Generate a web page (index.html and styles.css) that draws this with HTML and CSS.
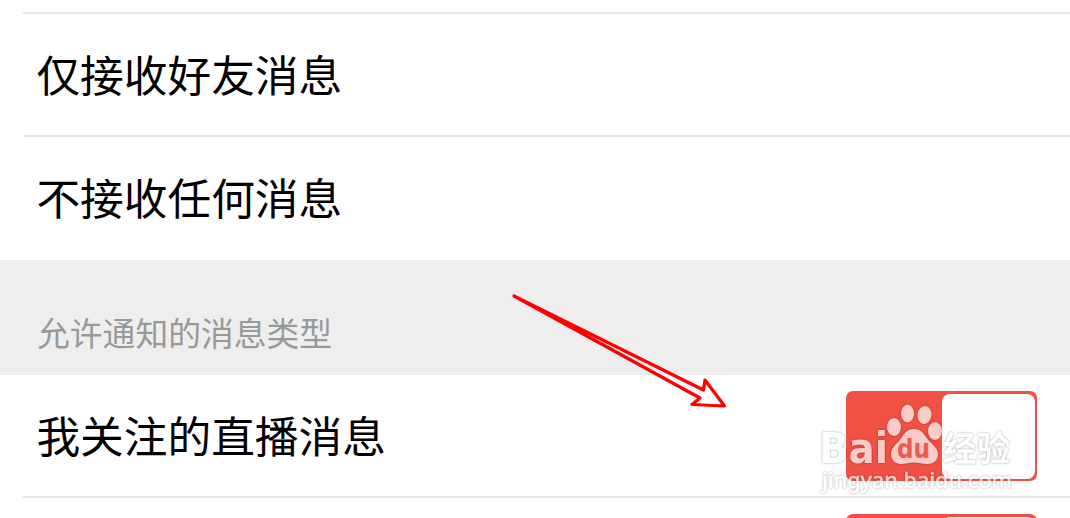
FILE: index.html
```html
<!DOCTYPE html>
<html lang="zh-CN">

<head>
    <meta charset="UTF-8">
    <meta name="viewport" content="width=device-width, initial-scale=1.0">
    <title>消息设置</title>
    <link rel="stylesheet" href="styles.css">
</head>
<body>
<div class="page">
  <div class="row row-top"></div>
  <div class="row"><span class="label">仅接收好友消息</span></div>
  <div class="row row-last"><span class="label">不接收任何消息</span></div>
  <h2 class="section">允许通知的消息类型</h2>
  <div class="row row-live">
    <span class="label">我关注的直播消息</span>
    <span class="switch"><span class="knob"></span></span>
  </div>
  <div class="row row-next">
    <span class="switch"><span class="knob"></span></span>
  </div>
</div>

<svg class="arrow" width="230" height="130" viewBox="505 285 230 130">
  <path d="M514 296 L703.500 390 L705 380 L724.500 406 L692 404.500 L700 398 Z"/>
</svg>

<svg class="watermark" width="220" height="110" viewBox="810 395 220 110">
  <g class="mark">
    <text class="bai" x="819" y="462.500" textLength="69" lengthAdjust="spacingAndGlyphs">Bai</text>
    <ellipse cx="894" cy="427" rx="7" ry="9"/>
    <ellipse cx="907.500" cy="413.500" rx="6.500" ry="9"/>
    <ellipse cx="924.500" cy="415" rx="7" ry="9" transform="rotate(8 924.500 415)"/>
    <ellipse cx="935" cy="431" rx="7" ry="9"/>
    <path d="M914 429 C920 429 923 432 926 437 C930 443 938 447 938 454 C938 461 933 464 927 464 C922 464 919 462.500 914 462.500 C909 462.500 906 464 901 464 C895 464 891 460 891 454 C891 447 898 443 902 437 C905 432 908 429 914 429 Z"/>
    <text class="jingyan" x="943" y="460.500" textLength="67" lengthAdjust="spacingAndGlyphs">经验</text>
    <text class="site" x="822" y="488" textLength="190" lengthAdjust="spacingAndGlyphs">jingyan.baidu.com</text>
  </g>
  <text class="du" x="897" y="457.500" textLength="33" lengthAdjust="spacingAndGlyphs">du</text>
</svg>
</body>
</html>
```

FILE: styles.css
```css
body {
    font-family: "Noto Sans CJK SC", sans-serif;
    background-color: #fff;
    margin: 0;
    padding: 0;
    overflow: hidden;
}

.page {
    height: 518px;
    overflow: hidden;
}

.row {
    display: flex;
    align-items: center;
    justify-content: space-between;
    box-sizing: border-box;
    height: 123px;
    margin-left: 23px;
    padding: 0 33px 0 13.4px;
    border-bottom: 2px solid #e6e6e6;
    color: #000;
    font-size: 43.7px;
    line-height: 64px;
}

.label {
    padding-bottom: 4px;
}

.row-top {
    height: 14px;
}

.row-last {
    border-bottom: none;
}

.row-last .label {
    padding-bottom: 6px;
}

.section {
    box-sizing: border-box;
    height: 115px;
    margin: 0;
    padding: 47px 0 0 37px;
    background-color: #eee;
    color: #999;
    font-size: 32.8px;
    font-weight: normal;
    line-height: 50px;
}

.row-next {
    justify-content: flex-end;
}

.switch {
    display: flex;
    justify-content: flex-end;
    box-sizing: border-box;
    width: 191px;
    height: 90px;
    padding: 3px 2px 2px;
    border-radius: 7px;
    background-color: #f15044;
}

.knob {
    width: 93px;
    border-radius: 8px;
    background-color: #fff;
}

.arrow {
    position: absolute;
    left: 505px;
    top: 285px;
    fill: none;
    stroke: #f00;
    stroke-width: 3.2;
    stroke-linejoin: round;
}

.watermark {
    position: absolute;
    left: 810px;
    top: 395px;
}

.mark {
    fill: #fff;
    opacity: 0.7;
    filter: drop-shadow(0 0 1px rgba(0, 0, 0, 0.5));
}

.bai {
    font: bold 42px "DejaVu Sans", sans-serif;
}

.du {
    fill: #ed5b50;
    font: bold 26px "DejaVu Sans", sans-serif;
}

.jingyan {
    font: bold 34px "Noto Sans CJK SC", sans-serif;
}

.site {
    font: 500 22.5px "Noto Sans", sans-serif;
    stroke: #fff;
    stroke-width: 0.4;
}
```
